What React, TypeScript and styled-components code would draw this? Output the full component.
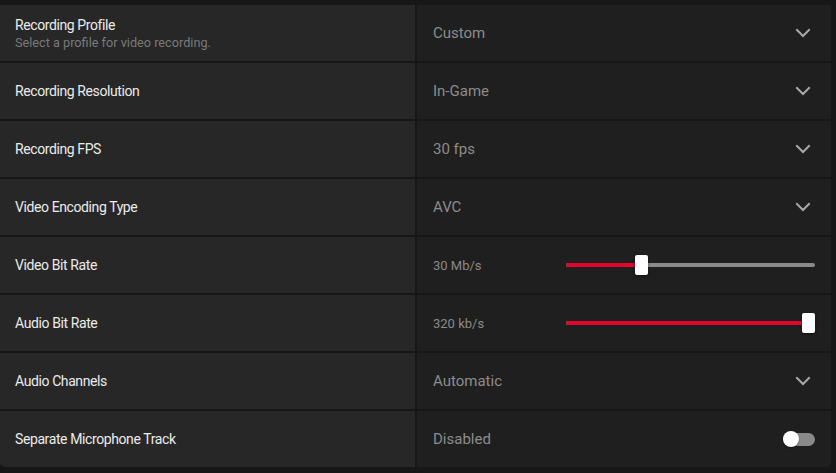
import React from "react";
import styled, { createGlobalStyle } from "styled-components";

const Global = createGlobalStyle`
  html, body { margin: 0; padding: 0; background: #171717; }
  body { font-family: Roboto, "Noto Sans", "Liberation Sans", sans-serif; }
`;

const Page = styled.div`
  width: 836px;
  height: 473px;
  box-sizing: border-box;
  padding: 5px 5px 0 0;
  background: #171717;
`;

const Table = styled.div`
  display: grid;
  grid-template-columns: 415px 414px;
  column-gap: 2px;
  row-gap: 2px;
  grid-auto-rows: 56px;
`;

const LabelCell = styled.div<{ $last?: boolean }>`
  background: #272727;
  padding: 0 15px;
  display: flex;
  flex-direction: column;
  justify-content: center;
  border-bottom-left-radius: ${(p) => (p.$last ? "5px" : "0")};
`;

const ValueCell = styled.div<{ $last?: boolean }>`
  background: #1f1f1f;
  padding: 0 16px 0 16px;
  display: flex;
  align-items: center;
  border-bottom-right-radius: ${(p) => (p.$last ? "5px" : "0")};
`;

const Title = styled.div`
  color: #ebebeb;
  font-size: 14px;
  letter-spacing: -0.4px;
  line-height: 18px;
`;

const Sub = styled.div`
  color: #7a7a7a;
  font-size: 12.7px;
  line-height: 16px;
  margin-top: 1px;
`;

const Value = styled.div`
  flex: 1;
  color: #8c8c8c;
  font-size: 15px;
`;

const SmallValue = styled.div`
  width: 133px;
  flex: none;
  color: #8a8a8a;
  font-size: 13px;
`;

const Chevron = styled.svg`
  width: 16px;
  height: 16px;
  margin-right: 4px;
  flex: none;
`;

const SliderBox = styled.div`
  position: relative;
  flex: 1;
  height: 20px;
`;

const Track = styled.div`
  position: absolute;
  left: 0;
  right: 0;
  top: 8px;
  height: 4px;
  border-radius: 2px;
  background: #8a8a8a;
`;

const Fill = styled.div`
  position: absolute;
  left: 0;
  top: 8px;
  height: 4px;
  border-radius: 2px;
  background: #e0062d;
`;

const Thumb = styled.div`
  position: absolute;
  top: 0;
  width: 13px;
  height: 20px;
  border-radius: 2px;
  background: #ffffff;
  box-shadow: 0 1px 3px rgba(0, 0, 0, 0.5);
`;

const Toggle = styled.div`
  position: relative;
  width: 32px;
  height: 13px;
  border-radius: 7px;
  background: #8a8a8a;
  flex: none;
`;

const Knob = styled.div`
  position: absolute;
  left: 0;
  top: -1.5px;
  width: 16px;
  height: 16px;
  border-radius: 50%;
  background: #ffffff;
  box-shadow: 0 1px 2px rgba(0, 0, 0, 0.4);
`;

const ChevronIcon = () => (
  <Chevron viewBox="0 0 16 16">
    <polyline
      points="2,5 8,11 14,5"
      fill="none"
      stroke="#a8a8a8"
      strokeWidth="2"
      strokeLinecap="square"
    />
  </Chevron>
);

const Slider = ({ p }: { p: number }) => {
  const width = 249;
  const thumbW = 13;
  const left = p * (width - thumbW);
  return (
    <SliderBox>
      <Track />
      <Fill style={{ width: left + thumbW / 2 }} />
      <Thumb style={{ left }} />
    </SliderBox>
  );
};

type Row =
  | { label: string; sub?: string; kind: "select"; value: string }
  | { label: string; kind: "slider"; value: string; p: number }
  | { label: string; kind: "toggle"; value: string };

const rows: Row[] = [
  { label: "Recording Profile", sub: "Select a profile for video recording.", kind: "select", value: "Custom" },
  { label: "Recording Resolution", kind: "select", value: "In-Game" },
  { label: "Recording FPS", kind: "select", value: "30 fps" },
  { label: "Video Encoding Type", kind: "select", value: "AVC" },
  { label: "Video Bit Rate", kind: "slider", value: "30 Mb/s", p: 0.292 },
  { label: "Audio Bit Rate", kind: "slider", value: "320 kb/s", p: 1 },
  { label: "Audio Channels", kind: "select", value: "Automatic" },
  { label: "Separate Microphone Track", kind: "toggle", value: "Disabled" },
];

export default function App() {
  return (
    <Page>
      <Global />
      <Table>
        {rows.map((r, i) => {
          const last = i === rows.length - 1;
          return (
            <React.Fragment key={r.label}>
              <LabelCell $last={last}>
                <Title>{r.label}</Title>
                {"sub" in r && r.sub ? <Sub>{r.sub}</Sub> : null}
              </LabelCell>
              <ValueCell $last={last}>
                {r.kind === "select" && (
                  <>
                    <Value>{r.value}</Value>
                    <ChevronIcon />
                  </>
                )}
                {r.kind === "slider" && (
                  <>
                    <SmallValue>{r.value}</SmallValue>
                    <Slider p={r.p} />
                  </>
                )}
                {r.kind === "toggle" && (
                  <>
                    <Value>{r.value}</Value>
                    <Toggle>
                      <Knob />
                    </Toggle>
                  </>
                )}
              </ValueCell>
            </React.Fragment>
          );
        })}
      </Table>
    </Page>
  );
}
